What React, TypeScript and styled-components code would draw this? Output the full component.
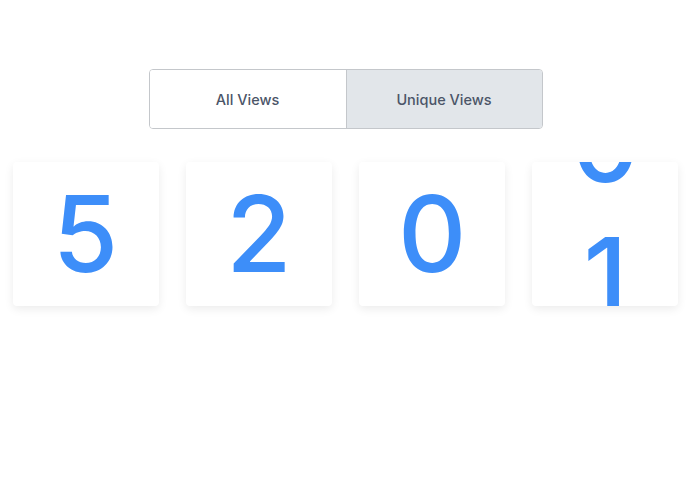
import { useState } from "react";
import styled, { createGlobalStyle } from "styled-components";

const GlobalStyle = createGlobalStyle`
  html, body {
    margin: 0;
    padding: 0;
    background: #ffffff;
    font-family: Inter, "Noto Sans", sans-serif;
  }
`;

type Counter = { digits: number[]; offset: number };

const counters: Counter[] = [
  { digits: [5], offset: 6 },
  { digits: [2], offset: 6 },
  { digits: [0], offset: 6 },
  { digits: [0, 1], offset: -84 },
];

export default function App() {
  const [mode, setMode] = useState<"all" | "unique">("unique");

  return (
    <>
      <GlobalStyle />
      <Page>
        <Toggle>
          <ToggleButton $active={mode === "all"} onClick={() => setMode("all")}>
            All Views
          </ToggleButton>
          <ToggleButton
            $active={mode === "unique"}
            onClick={() => setMode("unique")}
          >
            Unique Views
          </ToggleButton>
        </Toggle>
        <Cards>
          {counters.map((c, i) => (
            <Card key={i}>
              <Reel $offset={c.offset}>
                {c.digits.map((d, j) => (
                  <Digit key={j}>{d}</Digit>
                ))}
              </Reel>
            </Card>
          ))}
        </Cards>
      </Page>
    </>
  );
}

const Page = styled.main`
  width: 691px;
  min-height: 503px;
  display: flex;
  flex-direction: column;
  align-items: center;
  padding-top: 69px;
  box-sizing: border-box;
`;

const Toggle = styled.div`
  width: 394px;
  height: 60px;
  display: grid;
  grid-template-columns: 1fr 1fr;
  border: 1px solid #c4c7cb;
  border-radius: 4px;
  overflow: hidden;
  box-sizing: border-box;
`;

const ToggleButton = styled.button<{ $active: boolean }>`
  border: none;
  margin: 0;
  padding: 0;
  background: ${({ $active }) => ($active ? "#e2e6ea" : "#ffffff")};
  color: #4b5568;
  font-family: Inter, "Noto Sans", sans-serif;
  font-size: 14.5px;
  font-weight: 500;
  cursor: pointer;
  & + & {
    border-left: 1px solid #c4c7cb;
  }
`;

const Cards = styled.div`
  margin-top: 33px;
  width: 666px;
  display: grid;
  grid-template-columns: repeat(4, 146px);
  justify-content: space-between;
`;

const Card = styled.div`
  height: 144px;
  background: #ffffff;
  border-radius: 4px;
  box-shadow: 0 3px 10px rgba(0, 0, 0, 0.08);
  overflow: hidden;
`;

const Reel = styled.div<{ $offset: number }>`
  display: flex;
  flex-direction: column;
  transform: translateY(${({ $offset }) => $offset}px);
`;

const Digit = styled.div`
  height: 132px;
  display: flex;
  align-items: center;
  justify-content: center;
  color: #3d8ef9;
  font-family: Inter, "Noto Sans", sans-serif;
  font-size: 106px;
  font-weight: 500;
  line-height: 1;
`;
